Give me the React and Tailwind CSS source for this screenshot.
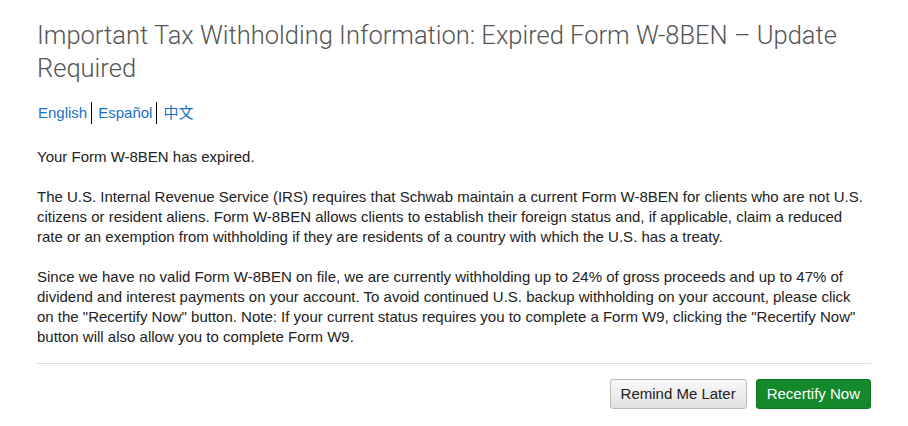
import React from "react";

const languages = ["English", "Español", "中文"];

const App = () => {
    return (
        <section className="w-[908px] bg-white pl-[37px] pr-[37px] pt-[19px] pb-4 text-[#222]">
            {/* Title */}
            <h1 className="font-['Roboto',sans-serif] font-light text-[25.5px] leading-[33px] text-[#555]">
                Important Tax Withholding Information: Expired Form W-8BEN – Update Required
            </h1>

            {/* Language links */}
            <div className="flex items-center mt-[17px] ml-px font-['Liberation_Sans','Noto_Sans_CJK_SC',sans-serif] text-[15px] text-[#1a6fc9]">
                {languages.map((lang, index) => (
                    <span
                        key={lang}
                        className={
                            index === 0
                                ? "pr-[4px] leading-[22px]"
                                : "border-l border-black pl-[6px] pr-[4px] leading-[22px]"
                        }
                    >
                        {lang}
                    </span>
                ))}
            </div>

            {/* Body */}
            <div className="mt-[23px] space-y-5 font-['Liberation_Sans',sans-serif] text-[15px] leading-[20px] text-[#222]">
                <p>Your Form W-8BEN has expired.</p>
                <p>
                    The U.S. Internal Revenue Service (IRS) requires that Schwab maintain a current Form W-8BEN for clients who are not U.S. citizens or resident aliens. Form W-8BEN allows clients to establish their foreign status and, if applicable, claim a reduced rate or an exemption from withholding if they are residents of a country with which the U.S. has a treaty.
                </p>
                <p>
                    Since we have no valid Form W-8BEN on file, we are currently withholding up to 24% of gross proceeds and up to 47% of dividend and interest payments on your account. To avoid continued U.S. backup withholding on your account, please click on the "Recertify Now" button. Note: If your current status requires you to complete a Form W9, clicking the "Recertify Now" button will also allow you to complete Form W9.
                </p>
            </div>

            {/* Footer */}
            <div className="mt-[16px] border-t border-[#ddd] pt-[15px] flex justify-end gap-[9px] font-['Liberation_Sans',sans-serif] text-[15px]">
                <button className="h-[30px] px-[10px] rounded-[3px] border border-[#bbb] bg-gradient-to-b from-[#f8f8f8] to-[#e2e2e2] text-[#222]">
                    Remind Me Later
                </button>
                <button className="h-[30px] px-[10px] rounded-[3px] border border-[#0f7a22] bg-[#13892b] text-white">
                    Recertify Now
                </button>
            </div>
        </section>
    );
};

export default App;
